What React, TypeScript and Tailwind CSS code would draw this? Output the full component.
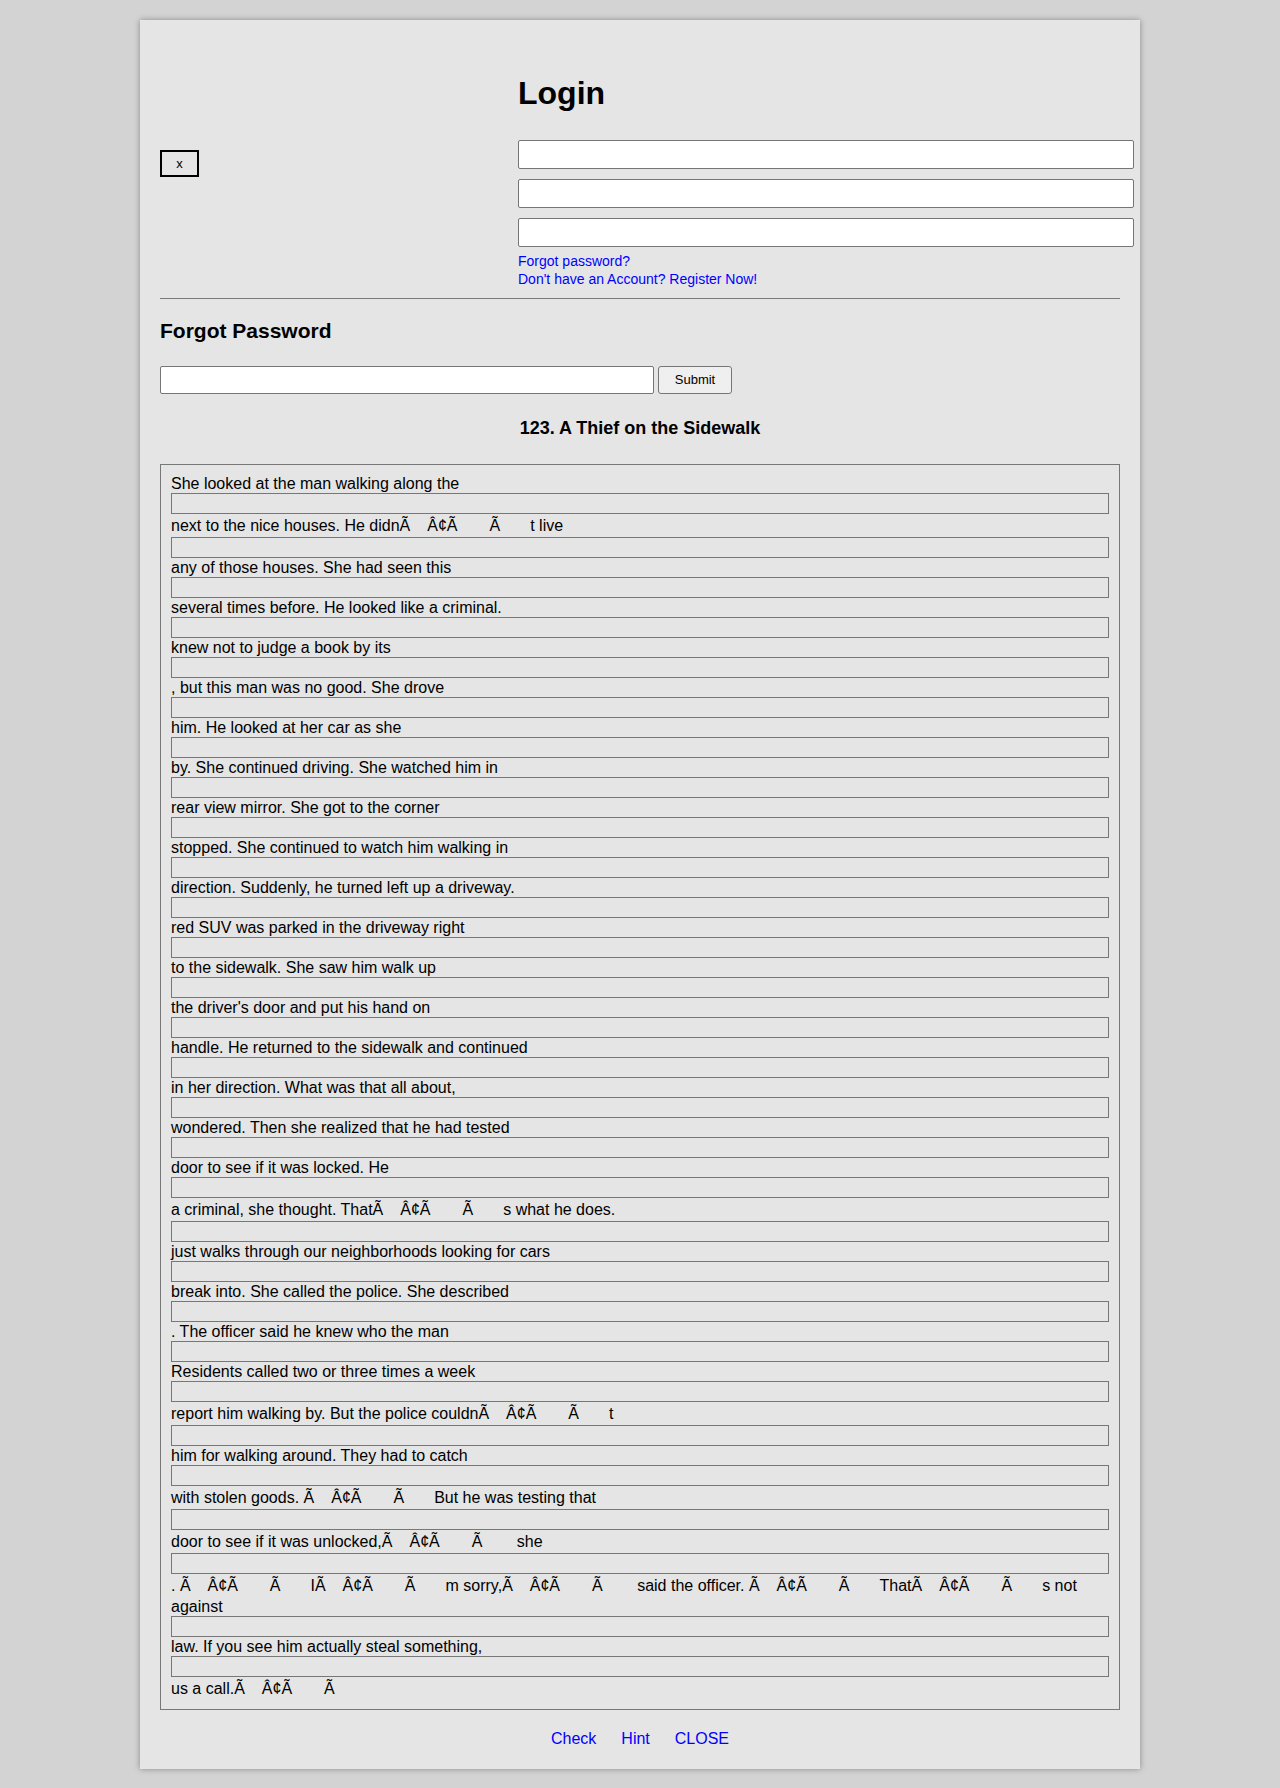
import React from "react";

// "§" marks a garbled curly quote in the story text
const storyLines: string[][] = [
  ["She looked at the man walking along the"],
  ["next to the nice houses. He didn§t live"],
  ["any of those houses. She had seen this"],
  ["several times before. He looked like a criminal."],
  ["knew not to judge a book by its"],
  [", but this man was no good. She drove"],
  ["him. He looked at her car as she"],
  ["by. She continued driving. She watched him in"],
  ["rear view mirror. She got to the corner"],
  ["stopped. She continued to watch him walking in"],
  ["direction. Suddenly, he turned left up a driveway."],
  ["red SUV was parked in the driveway right"],
  ["to the sidewalk. She saw him walk up"],
  ["the driver's door and put his hand on"],
  ["handle. He returned to the sidewalk and continued"],
  ["in her direction. What was that all about,"],
  ["wondered. Then she realized that he had tested"],
  ["door to see if it was locked. He"],
  ["a criminal, she thought. That§s what he does."],
  ["just walks through our neighborhoods looking for cars"],
  ["break into. She called the police. She described"],
  [". The officer said he knew who the man"],
  ["Residents called two or three times a week"],
  ["report him walking by. But the police couldn§t"],
  ["him for walking around. They had to catch"],
  ["with stolen goods. §But he was testing that"],
  ["door to see if it was unlocked,§ she"],
  [". §I§m sorry,§ said the officer. §That§s not", "against"],
  ["law. If you see him actually steal something,"],
  ["us a call.§"],
];

const Garbled = () => (
  <>
    Ã<span className="inline-block w-[17px]" />Â¢Ã
    <span className="inline-block w-[32px]" />Ã
    <span className="inline-block w-[30px]" />
  </>
);

const StoryText = ({ text }: { text: string }) => {
  const parts = text.split("§");
  const hasGarble = parts.length > 1;
  return (
    <div className={hasGarble ? "leading-[19px] pt-[2px] pb-[2px]" : "leading-[19px]"}>
      {parts.map((p, i) => (
        <React.Fragment key={i}>
          {i > 0 && <Garbled />}
          {p}
        </React.Fragment>
      ))}
    </div>
  );
};

export default function App() {
  return (
    <div className="min-h-screen bg-[#d3d3d3] pt-5 pb-5 font-['Liberation_Sans',Arial,sans-serif] text-black">
      <div className="mx-auto w-[1000px] bg-[#e5e5e5] px-5 pb-[21px] shadow-[0_0_6px_rgba(0,0,0,0.35)]">
        <div className="flex">
          <div className="w-[358px] shrink-0 pt-[130px]">
            <button
              type="button"
              className="flex h-[27px] w-[39px] items-center justify-center border-2 border-black text-[13px] leading-none"
            >
              x
            </button>
          </div>
          <div className="w-[616px] shrink-0 pt-[55px]">
            <h1 className="text-[32px] font-bold leading-[37px]">Login</h1>
            <div className="mt-[28px] flex flex-col gap-[10px]">
              <input aria-label="Username" className="h-[29px] w-full rounded-[2px] border border-[#767676] bg-white" />
              <input aria-label="Email" className="h-[29px] w-full rounded-[2px] border border-[#767676] bg-white" />
              <input aria-label="Password" type="password" className="h-[29px] w-full rounded-[2px] border border-[#767676] bg-white" />
            </div>
            <div className="mt-[5px] text-[14px] leading-[18px] text-[#0000ff]">
              <a href="#" className="block">Forgot password?</a>
              <a href="#" className="block">Don't have an Account? Register Now!</a>
            </div>
          </div>
        </div>

        <hr className="mt-[10px] border-t border-[#7a7a7a]" />

        <h3 className="mt-[20px] text-[21px] font-bold leading-[24px]">Forgot Password</h3>
        <div className="mt-[23px] flex gap-[4px]">
          <input aria-label="Email address" className="h-[28px] w-[494px] rounded-[2px] border border-[#767676] bg-white" />
          <button
            type="button"
            className="h-[28px] w-[74px] rounded-[3px] border border-[#767676] bg-[#efefef] text-[13px]"
          >
            Submit
          </button>
        </div>

        <h3 className="mt-[24px] text-center text-[18px] font-bold leading-[21px]">
          123. A Thief on the Sidewalk
        </h3>

        <div className="mt-[25px] border border-[#777777] px-[10px] py-[9px] text-[16px]">
          {storyLines.map((line, i) => (
            <React.Fragment key={i}>
              {i > 0 && <div className="h-[21px] border border-[#777777]" />}
              {line.map((t, j) => (
                <StoryText key={j} text={t} />
              ))}
            </React.Fragment>
          ))}
        </div>

        <div className="mt-[20px] flex justify-center gap-[25px] text-[16px] leading-[18px] text-[#0000ff]">
          <a href="#">Check</a>
          <a href="#">Hint</a>
          <a href="#">CLOSE</a>
        </div>
      </div>
    </div>
  );
}
